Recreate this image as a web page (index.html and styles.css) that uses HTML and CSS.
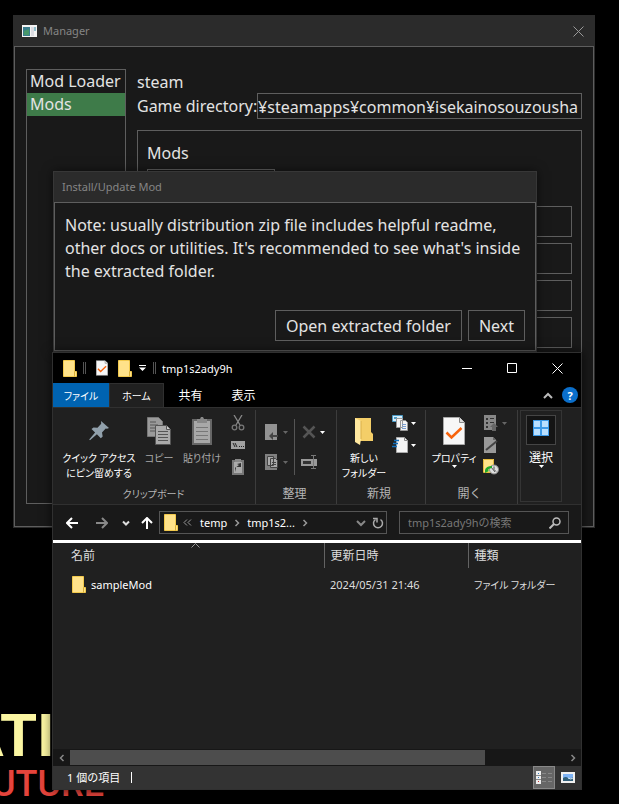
FILE: index.html
```html
<!DOCTYPE html>
<html lang="ja">
<head>
<meta charset="utf-8">
<meta name="viewport" content="width=device-width, initial-scale=1">
<title>Manager</title>
<link rel="stylesheet" href="styles.css">
</head>
<body>
<svg class="defs" aria-hidden="true">
  <symbol id="folder" viewBox="0 0 14 17"><path d="M.5 .5h11v11h2v5H.5z" fill="#ffe28a"/><path d="M.5 .5h11v11h2v5H.5z" fill="none" stroke="#f2c94c"/><path d="M11.5 11.500v5" stroke="#d9ae35"/></symbol>
  <symbol id="down" viewBox="0 0 5 3"><path d="M0 0h5L2.500 3z" fill="currentColor"/></symbol>
  <symbol id="check" viewBox="0 0 22 28"><path d="M.5 .5h16l5 5v22H.5z" fill="#f7f7f7" stroke="#a9a9a9"/><path d="M16.500 .5v5h5" fill="#ddd" stroke="#888"/><path d="M3.500 15.500l5 5L18.500 11" fill="none" stroke="#f7630c" stroke-width="2.500"/></symbol>
  <symbol id="right" viewBox="0 0 6 8"><path d="M1.500 1l3 3-3 3" fill="none" stroke="currentColor" stroke-width="1.500"/></symbol>
</svg>
<main class="desktop">
  <div class="wallpaper" aria-hidden="true">
    <div class="art-title">ATIO</div>
    <div class="art-sub">FUTURE</div>
  </div>

  <section class="window manager">
    <header class="titlebar">
      <svg class="app-icon" viewBox="0 0 15 12"><path d="M0 0h15v12H0z" fill="#f4f4f4"/><path d="M1 2h7v9H1z" fill="#3b7d8d"/><path d="M2 6l5-2v6H2z" fill="#47976a"/><path d="M9 2h3v9H9z" fill="#dcdce2"/><path d="M12 2h2v4h-2z" fill="#8fbecb"/></svg>
      <span class="caption">Manager</span>
      <button class="close" aria-label="Close"><svg viewBox="0 0 11 11"><path d="M.5 .5l10 10M10.500 .5l-10 10" stroke="#999"/></svg></button>
    </header>
    <div class="manager-body">
      <nav class="side">
        <button class="side-item">Mod Loader</button>
        <button class="side-item active">Mods</button>
      </nav>
      <div class="content">
        <div class="line">steam</div>
        <div class="dir"><label for="dir">Game directory:</label><input id="dir" value="m¥steamapps¥common¥isekainosouzousha"></div>
        <div class="panel">
          <div class="line">Mods</div>
          <div class="tab-box"></div>
          <div class="slots"><div class="slot"></div><div class="slot"></div><div class="slot"></div><div class="slot"></div></div>
        </div>
      </div>
    </div>
  </section>

  <section class="window dialog">
    <header class="titlebar"><span class="caption">Install/Update Mod</span></header>
    <div class="dialog-body">
      <p>Note: usually distribution zip file includes helpful readme, other docs or utilities. It's recommended to see what's inside the extracted folder.</p>
      <div class="actions"><button>Open extracted folder</button><button>Next</button></div>
    </div>
  </section>

  <section class="explorer">
    <header class="ex-title">
      <svg class="folder"><use href="#folder"/></svg>
      <i class="grip"></i>
      <svg class="mini-check"><use href="#check"/></svg>
      <svg class="folder"><use href="#folder"/></svg>
      <svg class="qa-more" viewBox="0 0 7 6"><path d="M0 0h7v1H0zM0 2.500h7L3.500 6z" fill="#fff"/></svg>
      <i class="grip last"></i>
      <span class="ex-name">tmp1s2ady9h</span>
      <div class="controls">
        <button aria-label="最小化"><svg viewBox="0 0 11 11"><path d="M0 5.500h10" stroke="#fff"/></svg></button>
        <button aria-label="最大化"><svg viewBox="0 0 11 11"><path d="M.5 .5h9v9h-9z" fill="none" stroke="#fff"/></svg></button>
        <button aria-label="閉じる"><svg viewBox="0 0 11 11"><path d="M.5 .5l10 10M10.500 .5l-10 10" stroke="#fff"/></svg></button>
      </div>
    </header>
    <nav class="tabs">
      <button class="tab file kana">ファイル</button><button class="tab home kana">ホーム</button><button class="tab">共有</button><button class="tab">表示</button>
      <button class="collapse" aria-label="リボンの最小化"><svg viewBox="0 0 10 7"><path d="M1 6l4-4 4 4" fill="none" stroke="#bbb" stroke-width="2"/></svg></button>
      <button class="help" aria-label="ヘルプ">?</button>
    </nav>
    <div class="ribbon">
      <div class="group clip">
        <div class="tools">
          <button class="tool wide">
            <svg class="big" viewBox="0 0 28 28"><path d="M16 4l8 7-2 .8-1.300-.2-3.700 3.900.7 4-1.900 1.700-3.900-3.900-6.900 6-.8-.8 5.900-7L6.500 12l2-1.600 4 .4 3.700-4z" fill="#91a0ab"/></svg>
            <span>クイック アクセス<br>にピン留めする</span></button>
          <button class="tool copy dim">
            <svg class="big" viewBox="0 0 28 28"><path d="M2.500 .5h11l4 4v15h-15z" fill="#9a9a9a" stroke="#777"/><path d="M5 5h6M5 8h8M5 11h7M5 14h7" stroke="#555"/><path d="M10.500 8.500h11l4 4v15h-15z" fill="#aaa" stroke="#555"/><path d="M21.500 8.500v4h4" fill="#ccc" stroke="#555"/><path d="M13 14.500h10M13 17.500h10M13 20.500h10M13 23.500h10" stroke="#555"/></svg>
            <span>コピー</span></button>
          <button class="tool paste dim">
            <svg class="big" viewBox="0 0 28 28"><path d="M4 2h20v26H4z" fill="#666"/><path d="M6 4h16v22H6z" fill="#a8a8a8"/><path d="M9 2h3l1-2h2l1 2h3v4H9z" fill="#888"/><path d="M8 10.500h12M8 14.500h12M8 18.500h12M8 22.500h12" stroke="#777"/></svg>
            <span>貼り付け</span></button>
          <div class="stack three">
            <button aria-label="切り取り"><svg class="small" viewBox="0 0 16 16"><path d="M4 0l6 10M12 0L6 10" stroke="#888" stroke-width="1.300"/><circle cx="4.500" cy="12.500" r="2.300" fill="none" stroke="#777" stroke-width="1.300"/><circle cx="11.500" cy="12.500" r="2.300" fill="none" stroke="#777" stroke-width="1.300"/></svg></button>
            <button aria-label="パスのコピー"><svg class="small" viewBox="0 0 16 16"><path d="M1 4h14v8H1z" fill="#a0a0a0"/><path d="M3 6l2 4M5 6l2 4M9 9.500h1M11 9.500h1M13 9.500h1" stroke="#222"/></svg></button>
            <button aria-label="ショートカットの貼り付け"><svg class="small" viewBox="0 0 16 16"><path d="M2 1h12v15H2z" fill="#777"/><path d="M4 3h8v11H4z" fill="#aaa"/><path d="M5 0h6v3H5z" fill="#888"/><path d="M6 13V9l-1-1h6V4l-4 1 2 1-4 3z" fill="#333"/></svg></button>
          </div>
        </div>
        <div class="group-name kana">クリップボード</div>
      </div>
      <div class="group organize">
        <div class="tools">
          <div class="stack two">
            <button class="off" aria-label="移動先"><svg class="small" viewBox="0 0 16 16"><path d="M1 0h12v16H1z" fill="#929292"/><path d="M14 11H9V8l-4 4 4 4v-3h5z" fill="#444"/></svg><svg class="down"><use href="#down"/></svg></button>
            <button class="off" aria-label="コピー先"><svg class="small" viewBox="0 0 16 16"><path d="M1 0h12v16H1z" fill="#808080"/><path d="M3.500 2.500h6v9h-6zM6.500 4.500h5l2 2v7h-7z" fill="#aaa" stroke="#444"/><path d="M8 8.500h4M8 10.500h4" stroke="#444"/></svg><svg class="down"><use href="#down"/></svg></button>
          </div>
          <i class="rule"></i>
          <div class="stack two">
            <button aria-label="削除"><svg class="small" viewBox="0 0 16 16"><path d="M2.500 2.500l11 11M13.500 2.500l-11 11" stroke="#555" stroke-width="2.500"/></svg><svg class="down"><use href="#down"/></svg></button>
            <button aria-label="名前の変更"><svg class="small" viewBox="0 0 16 16"><path d="M0 5h16v7H0z" fill="#999"/><path d="M2 7h8v3H2z" fill="#333"/><path d="M10 1.500h5M12.500 1.500v13M10 14.500h5" stroke="#777"/></svg></button>
          </div>
        </div>
        <div class="group-name">整理</div>
      </div>
      <div class="group new">
        <div class="tools">
          <button class="tool mid"><svg class="big" viewBox="0 0 28 28"><path d="M5 1h16v14l2 2v7H5z" fill="#f4ce68"/><path d="M5 1l6 3v18l-1 6-5-3z" fill="#ffe89f"/><path d="M11 4v18" stroke="#d9b04a"/></svg><span>新しい<br>フォルダー</span></button>
          <div class="stack">
            <button aria-label="新しいアイテム"><svg class="small" viewBox="0 0 16 16"><path d="M.5 .5h10v6H.5z" fill="#d6ecf9" stroke="#4b9ac5"/><path d="M2 2h3v2H2z" fill="#4b9ac5"/><path d="M4.500 3.500h6v9h-6zM8.500 5.500h5l2 2v8h-7z" fill="#f5f5f5" stroke="#999"/><path d="M10 9.500h4M10 11.500h4M10 13.500h4" stroke="#7b9fd0"/></svg><svg class="down"><use href="#down"/></svg></button>
            <button aria-label="ショートカット"><svg class="small" viewBox="0 0 16 16"><path d="M4.500 .5h8l3 3v12h-11z" fill="#f5f5f5" stroke="#aaa"/><path d="M12.500 .5v3h3" fill="none" stroke="#888"/><path d="M2 3.500h5M1 6.500h5M0 9.500h5" stroke="#1470bd" stroke-width="1.500"/></svg><svg class="down"><use href="#down"/></svg></button>
          </div>
        </div>
        <div class="group-name">新規</div>
      </div>
      <div class="group open">
        <div class="tools">
          <button class="tool mid"><svg class="big doc"><use href="#check"/></svg><span>プロパティ</span><svg class="down"><use href="#down"/></svg></button>
          <div class="stack three">
            <button class="off" aria-label="開く"><svg class="small" viewBox="0 0 16 16"><path d="M1 0h12v15H1z" fill="#888"/><path d="M3 3h2v2H3zM3 7h2v2H3zM3 11h2v2H3zM7 3h4v1H7zM7 7h4v1H7z" fill="#333"/><path d="M9 16v-4H7l4-4 4 4h-2v4z" fill="#666"/></svg><svg class="down"><use href="#down"/></svg></button>
            <button aria-label="編集"><svg class="small" viewBox="0 0 16 16"><path d="M1 0h9l3 3v13H1z" fill="#999"/><path d="M10 0v3h3" fill="#666"/><path d="M3 13L14 4" stroke="#444" stroke-width="2"/></svg></button>
            <button aria-label="履歴"><svg class="small" viewBox="0 0 16 16"><path d="M0 0h11v13H0z" fill="#ffe28a"/><path d="M.5 .5h10v13H.5z" fill="none" stroke="#e5ba3d"/><circle cx="11" cy="10.500" r="4.500" fill="#ddd" stroke="#888"/><path d="M11 7.500v3l2 2M8 8l4 5" stroke="#555" fill="none"/><path d="M2 11q1-4 7-4v2q-3 0-4 2l1 1-4 2z" fill="#22a82a"/></svg></button>
          </div>
        </div>
        <div class="group-name">開く</div>
      </div>
      <div class="select-group">
        <button class="select"><span class="select-icon"><svg viewBox="0 0 16 16"><path d="M0 0h16v16H0z" fill="#3d9ae8"/><path d="M1 1h6v6H1zM9 1h6v6H9zM1 9h6v6H1zM9 9h6v6H9z" fill="#b9dfff"/></svg></span><span>選択</span><svg class="down"><use href="#down"/></svg></button>
      </div>
    </div>
    <div class="address">
      <button class="nav" aria-label="戻る"><svg viewBox="0 0 12 12"><path d="M12 6H1.500M6 1L1 6l5 5" fill="none" stroke="#fff" stroke-width="2"/></svg></button>
      <button class="nav" aria-label="進む"><svg viewBox="0 0 12 12"><path d="M0 6h10.500M6 1l5 5-5 5" fill="none" stroke="#888" stroke-width="2"/></svg></button>
      <button class="nav slim" aria-label="最近表示した場所"><svg viewBox="0 0 12 12"><path d="M2 4.500l3 3 3-3" fill="none" stroke="#ddd" stroke-width="2"/></svg></button>
      <button class="nav slim" aria-label="上へ"><svg viewBox="0 0 12 12"><path d="M6 12V1.500M1 6l5-5 5 5" fill="none" stroke="#fff" stroke-width="2"/></svg></button>
      <div class="path">
        <svg class="folder"><use href="#folder"/></svg>
        <svg class="laquo" viewBox="0 0 9 7"><path d="M4 .5l-3 3 3 3M8 .5l-3 3 3 3" fill="none" stroke="#999"/></svg>
        <a href="#">temp</a><svg class="right"><use href="#right"/></svg><a href="#">tmp1s2...</a><svg class="right"><use href="#right"/></svg>
        <button class="drop" aria-label="履歴"><svg viewBox="0 0 10 10"><path d="M1 3l4 4 4-4" fill="none" stroke="#888" stroke-width="2"/></svg></button>
        <button class="refresh" aria-label="更新"><svg viewBox="0 0 12 12"><path d="M8.500 2.500a4.500 4.500 0 1 1-5 0" fill="none" stroke="#aaa" stroke-width="1.500"/><path d="M1 1.500h4v4" fill="none" stroke="#aaa" stroke-width="1.500"/></svg></button>
      </div>
      <div class="search"><input aria-label="検索" placeholder="tmp1s2ady9hの検索"><svg viewBox="0 0 12 12"><circle cx="7.500" cy="4.500" r="3.500" fill="none" stroke="#bbb" stroke-width="1.500"/><path d="M5 7L.5 11.500" stroke="#bbb" stroke-width="2"/></svg></div>
    </div>
    <div class="files">
      <svg class="sort" viewBox="0 0 9 5"><path d="M.5 4.500l4-4 4 4" fill="none" stroke="#999"/></svg>
      <table>
        <thead><tr><th class="c-name">名前</th><th class="c-date">更新日時</th><th>種類</th></tr></thead>
        <tbody><tr><td><span class="entry"><svg class="folder"><use href="#folder"/></svg>sampleMod</span></td><td>2024/05/31 21:46</td><td class="kana">ファイル フォルダー</td></tr></tbody>
      </table>
    </div>
    <div class="scroll">
      <button aria-label="左"><svg class="left"><use href="#right"/></svg></button>
      <div class="track"><div class="thumb"></div></div>
      <button aria-label="右"><svg><use href="#right"/></svg></button>
    </div>
    <footer class="status">
      <span>1 個の項目</span><i class="caret"></i>
      <button class="view on" aria-label="詳細"><svg viewBox="0 0 16 13"><path d="M0 0h5v13H0z" fill="#eee"/><path d="M2 2h1v1H2zM2 6h1v1H2z" fill="#357bc0"/><path d="M2 10h1v1H2z" fill="#c03535"/><path d="M0 4.500h5M0 8.500h5" stroke="#888"/><path d="M6 2.500h4M12 2.500h4M6 6.500h4M12 6.500h4M6 10.500h4M12 10.500h4" stroke="#888"/></svg></button>
      <button class="view" aria-label="大アイコン"><svg class="picture" viewBox="0 0 14 11"><path d="M0 0h14v11H0z" fill="#f0f0f0"/><path d="M2 2h10v7H2z" fill="#7eb3f5"/><path d="M2 6q3-2 5 0t5-1v4H2z" fill="#315f79"/><path d="M7 6q3 2 5 0" stroke="#d7e9f7" fill="none"/></svg></button>
    </footer>
  </section>
</main>
</body>
</html>
```
FILE: styles.css
```css
* { box-sizing: border-box; }
body { margin: 0; background: #000; color: #e3e3e3; font-family: "Noto Sans", "Noto Sans CJK JP", sans-serif; }
button { margin: 0; padding: 0; border: 0; background: none; color: inherit; font: inherit; }
svg { display: block; flex: none; }
i { display: block; flex: none; }
a { color: inherit; text-decoration: none; }
.defs { position: absolute; width: 0; height: 0; }

.desktop { position: relative; min-height: 100vh; overflow: hidden; }

/* wallpaper */
.wallpaper { position: absolute; left: 0; bottom: 0; width: 104px; display: flex; flex-direction: column; align-items: flex-end; }
.art-title { font: bold 60px/56px "Liberation Sans Narrow", "Roboto", sans-serif; color: #fbf6a2; margin-right: 8px; }
.art-sub { font: 500 36px/40px Roboto, sans-serif; color: #e5443c; }

/* manager */
.window { position: absolute; background: #191919; font-size: 16px; line-height: 23px; box-shadow: 0 0 10px #0008; }
.manager { top: 15px; left: 13px; right: 24px; border: 1px solid #2b2b2b; }
.titlebar { display: flex; align-items: center; height: 30px; padding: 0 10px 0 8px; background: #2b2b2b; }
.caption { color: #858585; font-size: 11px; line-height: 16px; }
.app-icon { width: 15px; height: 12px; margin-right: 6px; }
.close { margin-left: auto; }
.close svg { width: 11px; height: 11px; }
.manager-body { display: flex; gap: 11px; padding: 22px 11px 22px; border: 1px solid #5e5e5e; }
.side { width: 100px; min-height: 435px; border: 1px solid #5e5e5e; flex: none; }
.side-item { display: block; width: 100%; height: 23px; padding: 0 0 0 3px; text-align: left; white-space: nowrap; }
.side-item.active { background: #3e7b49; }
.content { flex: 1; min-width: 0; padding-top: 1px; }
.line { height: 23px; line-height: 25px; }
.dir { display: flex; align-items: center; height: 26px; }
.dir label { flex: none; width: 120px; line-height: 25px; white-space: nowrap; }
.dir input { flex: 1; min-width: 0; height: 26px; padding: 2px 3px 0 0; border: 1px solid #5e5e5e; background: #191919; color: inherit; font: inherit; direction: rtl; }
.panel { margin-top: 11px; height: 373px; padding: 10px 9px; border: 1px solid #5e5e5e; }
.tab-box { width: 128px; height: 31px; margin-top: 5px; border: 1px solid #5e5e5e; }
.slots { display: flex; flex-direction: column; gap: 6px; margin-top: 6px; }
.slot { height: 31px; border: 1px solid #5e5e5e; }

/* dialog */
.dialog { top: 171px; left: 53px; right: 82px; border: 1px solid #373737; }
.dialog-body { padding: 11px 10px 9px; border: 1px solid #5e5e5e; }
.dialog p { margin: 0; }
.actions { display: flex; justify-content: flex-end; gap: 6px; margin-top: 27px; }
.actions button { height: 31px; padding: 2px 10px 0; border: 1px solid #5e5e5e; white-space: nowrap; }

/* explorer */
.explorer { position: absolute; top: 352px; bottom: 14px; left: 52px; right: 37px; min-height: 400px; display: flex; flex-direction: column; border: 1px solid #303030; background: #202020; color: #fff; font-size: 11px; line-height: 15px; box-shadow: 0 0 10px #000a; }
.kana, .tool { font-family: "Noto Sans CJK JP", sans-serif; font-feature-settings: "palt"; }
.folder { width: 14px; height: 17px; }
.down { width: 5px; height: 3px; }
.ex-title { display: flex; align-items: center; height: 30px; padding-left: 10px; background: #000; }
.grip { width: 3px; height: 12px; margin: 0 10px 0 6px; border: solid #555; border-width: 0 1px; }
.grip.last { margin: 0 6px 0 7px; }
.mini-check { width: 12px; height: 16px; margin-right: 10px; }
.qa-more { width: 7px; height: 6px; margin-left: 7px; }
.controls { display: flex; margin-left: auto; padding-right: 1px; }
.controls button { width: 45px; height: 30px; display: grid; place-items: center; }
.controls svg { width: 11px; height: 11px; }
.tabs { display: flex; align-items: stretch; height: 24px; background: #000; }
.tab { width: 53px; font-size: 12px; }
.tab.file { width: 56px; background: #0063b1; }
.tab.home { width: 55px; border: 1px solid #303030; border-bottom: 0; background: #202020; }
.collapse { margin-left: auto; }
.collapse svg { width: 10px; height: 7px; }
.help { width: 16px; height: 16px; margin: 4px 3px 0 9px; border-radius: 50%; background: #0b6fcb; font-weight: bold; }

.ribbon { display: flex; height: 98px; border: solid #303030; border-width: 1px 0; overflow: hidden; }
.group { display: flex; flex-direction: column; flex: none; margin-top: 2px; border-right: 1px solid #3c3c3c; }
.clip { padding: 0 9px 0 8px; }
.tools { display: flex; gap: 7px; flex: 1; }
.group-name { height: 18px; color: #b5b5b5; font-size: 12px; text-align: center; }
.group-name.kana, .tab.kana, .tool, .files .kana { font-size: 10px; }
.tool { display: flex; flex-direction: column; align-items: center; width: 44px; padding-top: 7px; }
.tool span { margin-top: 5px; white-space: nowrap; }
.big { width: 28px; height: 28px; }
.big.doc { width: 22px; }
.tool.wide { width: 76px; }
.tool.copy { width: 30px; }
.tool.paste { width: 42px; }
.dim { color: #aaa; }
.stack { display: flex; flex-direction: column; padding-top: 2px; }
.stack button { display: flex; align-items: center; gap: 3px; height: 22px; }
.stack.two { padding-top: 7px; }
.stack.two button { height: 30px; }
.small { width: 16px; height: 16px; }
.off .down { color: #666; }
.organize { padding: 0 11px 0 8px; }
.organize .tools, .new .tools { gap: 6px; }
.rule { width: 1px; height: 56px; margin-top: 9px; background: #555; }
.new { padding: 0 9px 0 5px; }
.open { padding: 0 10px 0 6px; }
.select-group { width: 42px; margin: 2px 0 2px 2px; border: 1px solid #343434; }
.select { display: flex; flex-direction: column; align-items: center; width: 100%; padding-top: 4px; font-size: 12px; }
.select-icon { display: grid; justify-items: center; width: 30px; height: 30px; padding-top: 4px; margin-bottom: 5px; border: 1px solid #454545; background: #141414; }
.select-icon svg { width: 16px; height: 16px; }

.address { display: flex; align-items: center; height: 35px; padding: 0 12px 0 4px; background: #191919; }
.nav { width: 30px; display: grid; place-items: center; }
.nav svg { width: 12px; height: 12px; }
.nav.slim { width: 20px; }
.path { display: flex; align-items: center; flex: 1; min-width: 0; height: 23px; margin: 0 12px 0 2px; padding: 0 2px 0 4px; border: 1px solid #555; }
.laquo { width: 9px; height: 7px; margin: 0 8px 0 5px; }
.right { width: 6px; height: 8px; margin: 0 7px; color: #999; }
.drop { margin-left: auto; }
.drop svg { width: 10px; height: 10px; }
.refresh { margin-left: 6px; }
.refresh svg { width: 12px; height: 12px; }
.search { display: flex; align-items: center; width: 170px; height: 23px; padding: 0 7px 0 8px; border: 1px solid #555; }
.search input { flex: 1; min-width: 0; padding: 0; border: 0; background: none; color: #fff; font: inherit; }
.search input::placeholder { color: #777; opacity: 1; }
.search svg { width: 12px; height: 12px; }

.files { position: relative; flex: 1; border-top: 3px solid #fff; }
.sort { position: absolute; left: 138px; top: 0; width: 9px; height: 5px; }
.files table { width: 100%; border-collapse: collapse; table-layout: fixed; }
.files th { height: 25px; padding: 0 6px; font-size: 12px; text-align: left; font-weight: normal; color: #ddd; border-right: 1px solid #636363; }
.files th:first-child { padding-left: 18px; }
.files th:last-child { border-right: 0; }
.c-name { width: 271px; }
.c-date { width: 144px; }
.files td { height: 32px; padding: 0 6px; color: #ddd; }
.files td:first-child { padding-left: 19px; color: #fff; }
.entry { display: flex; align-items: center; gap: 5px; }
.scroll { display: flex; height: 17px; background: #171717; color: #888; }
.scroll button { width: 17px; display: grid; place-items: center; }
.scroll svg { width: 6px; height: 8px; }
.scroll .left { transform: rotate(180deg); }
.track { flex: 1; }
.thumb { width: 84%; height: 15px; margin-top: 1px; background: #4d4d4d; }
.status { display: flex; align-items: center; height: 23px; padding: 0 1px 0 14px; background: #333; }
.caret { width: 1px; height: 11px; margin-left: 11px; background: #fff; }
.view { width: 25px; height: 23px; display: grid; place-items: center; }
.view.on { width: 22px; margin-left: auto; border: 1px solid #888; background: #666; }
.view svg { width: 16px; height: 13px; }
.view .picture { width: 14px; height: 11px; }
```
